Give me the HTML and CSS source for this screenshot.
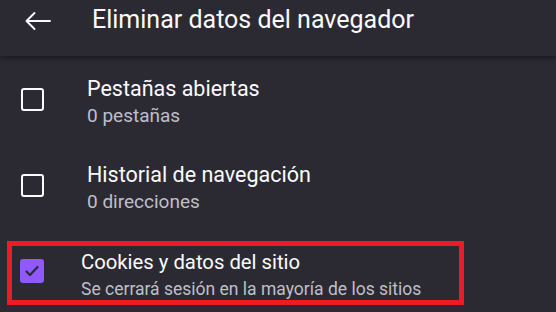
FILE: index.html
```html
<!DOCTYPE html>
<html lang="es">
<head>
    <meta charset="UTF-8">
    <meta name="viewport" content="width=device-width, initial-scale=1.0">
    <title>Eliminar datos del navegador</title>
    <link rel="stylesheet" href="styles.css">
</head>
<body>
    <header class="toolbar">
        <button class="back" aria-label="Atrás">
            <svg width="26" height="20" viewBox="0 0 26 20">
                <path d="M25 10H1.5M9.5 2L1.5 10l8 8" fill="none" stroke="#fbfbfe" stroke-width="1.9" stroke-linecap="round" stroke-linejoin="round"/>
            </svg>
        </button>
        <h1 class="title">Eliminar datos del navegador</h1>
    </header>

    <div class="list">
        <div class="item">
            <span class="checkbox"></span>
            <div class="text">
                <div class="label">Pestañas abiertas</div>
                <div class="summary">0 pestañas</div>
            </div>
        </div>
        <div class="item">
            <span class="checkbox"></span>
            <div class="text">
                <div class="label">Historial de navegación</div>
                <div class="summary">0 direcciones</div>
            </div>
        </div>
        <div class="item">
            <div class="highlight">
                <span class="checkbox checked">
                    <svg width="18" height="18" viewBox="0 0 18 18">
                        <path d="M3.5 9.5l3.5 3.5 7.5-8" fill="none" stroke="#2b2a33" stroke-width="2.2" stroke-linecap="round" stroke-linejoin="round"/>
                    </svg>
                </span>
                <div class="text">
                    <div class="label">Cookies y datos del sitio</div>
                    <div class="summary">Se cerrará sesión en la mayoría de los sitios</div>
                </div>
            </div>
        </div>
    </div>
</body>
</html>
```

FILE: styles.css
```css
body {
    margin: 0;
    background-color: #2b2a33;
    color: #fbfbfe;
    font-family: Roboto, "Noto Sans", sans-serif;
    overflow: hidden;
}
.toolbar {
    position: relative;
    display: flex;
    align-items: center;
    box-sizing: border-box;
    height: 56px;
    padding-bottom: 17px;
    background-color: #2b2a33;
    box-shadow: 0 2px 5px rgba(0, 0, 0, 0.45);
    z-index: 1;
}
.back {
    display: flex;
    align-items: center;
    width: 26px;
    height: 40px;
    margin: 3px 0 0 25px;
    padding: 0;
    background: none;
    border: none;
}
.title {
    margin: 0 0 0 41px;
    font-size: 25px;
    font-weight: 400;
    line-height: 40px;
}
.item {
    height: 86px;
    display: flex;
    align-items: center;
}
.item > .checkbox {
    margin-left: 21px;
}
.checkbox {
    box-sizing: border-box;
    width: 23px;
    height: 23px;
    border: 2.5px solid #fbfbfe;
    border-radius: 3px;
    flex-shrink: 0;
}
.checkbox.checked {
    display: flex;
    align-items: center;
    justify-content: center;
    width: 24px;
    height: 24px;
    margin-bottom: 4px;
    border: none;
    border-radius: 3px;
    background-color: #9059ff;
}
.text {
    margin: 4px 0 0 43px;
}
.label {
    font-size: 21.5px;
    line-height: 26px;
}
.summary {
    margin-top: 3px;
    font-size: 19px;
    line-height: 22px;
    color: #bfbfc9;
}
.highlight {
    align-self: flex-start;
    display: flex;
    align-items: center;
    box-sizing: border-box;
    width: 457px;
    height: 64px;
    margin: 13px 0 0 7px;
    padding-left: 8px;
    border: 5px solid #ed1c24;
}
.highlight .text {
    margin: 2px 0 0 37px;
}
.highlight .label {
    font-size: 20.3px;
}
.highlight .summary {
    font-size: 17.5px;
}
```
